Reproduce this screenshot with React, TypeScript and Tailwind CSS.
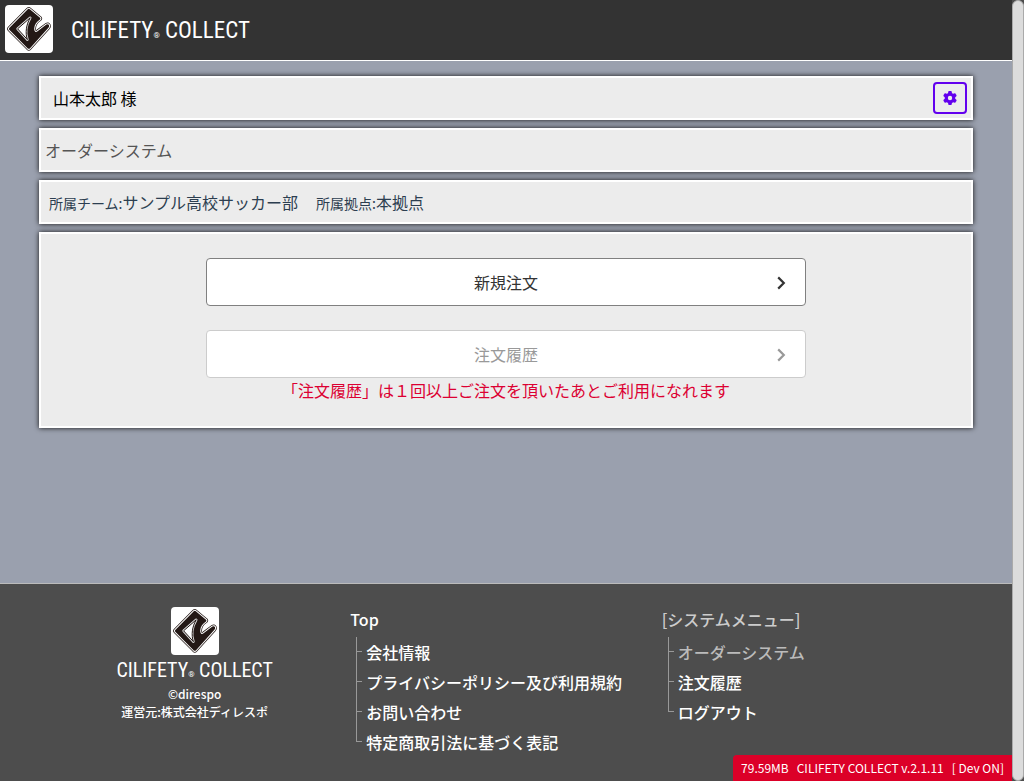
import type { ReactNode } from "react";
import { FaGear } from "react-icons/fa6";

type MenuItem = {
  label: string;
  href?: string;
};

const siteLinks: MenuItem[] = [
  { label: "会社情報", href: "#company" },
  { label: "プライバシーポリシー及び利用規約", href: "#privacy" },
  { label: "お問い合わせ", href: "#contact" },
  { label: "特定商取引法に基づく表記", href: "#law" },
];

// the current page has no href
const systemLinks: MenuItem[] = [
  { label: "オーダーシステム" },
  { label: "注文履歴", href: "#history" },
  { label: "ログアウト", href: "#logout" },
];

const LOGO_BODY =
  "M22.8 4.2 Q23.8 3.3 24.8 4.2 L35 12.8 Q35.8 13.6 35 14.4 C31.8 16.4 29.4 19.5 29.2 23.6 C29.2 27.4 31 27.6 32.6 26.2 L41.4 19.6 Q43.2 18.6 44 20.2 Q44.6 21.6 43.4 22.8 L24.8 43.4 Q23.8 44.3 22.8 43.4 L4.3 24.7 Q3.4 23.8 4.3 22.9 Z";
const LOGO_FIN = "M25.2 12.8 L12.6 23.8 L22.4 34.6 C20 28 21.2 19.6 25.2 12.8 Z";

function Logo() {
  return (
    <svg viewBox="0 0 48 48" className="size-12 shrink-0" aria-hidden="true">
      <rect width="48" height="48" rx="4" fill="#fff" />
      <path d={LOGO_BODY} fill="none" stroke="#231815" strokeWidth="3.4" strokeLinejoin="round" />
      <path d={LOGO_BODY} fill="none" stroke="#fff" strokeWidth="2" strokeLinejoin="round" />
      <path d={LOGO_BODY} fill="#231815" />
      <path d={LOGO_FIN} fill="none" stroke="#ddd" strokeWidth="2.6" strokeLinejoin="round" />
      <path d={LOGO_FIN} fill="#fff" stroke="#231815" strokeWidth="1" strokeLinejoin="round" />
    </svg>
  );
}

function Wordmark() {
  return (
    <>
      CILIFETY<span className="text-[8px] leading-none">®</span> COLLECT
    </>
  );
}

function Card({ className, children }: { className: string; children: ReactNode }) {
  return (
    <section className={"border-2 border-white bg-[#ececec] shadow-[0_0_5px_#111] " + className}>
      {children}
    </section>
  );
}

function OrderButton({ label, disabled }: { label: string; disabled?: boolean }) {
  return (
    <button
      type="button"
      disabled={disabled}
      className="grid h-12 w-full max-w-[600px] grid-cols-[24px_1fr_24px] items-center rounded border border-[#808080] bg-white px-3 text-[#333] disabled:border-[#ccc] disabled:text-[#999]"
    >
      <span className="col-start-2">{label}</span>
      <svg viewBox="0 0 24 24" className="size-6" aria-hidden="true">
        <path d="M9.2 7.4 L14.8 13 L9.2 18.6" fill="none" stroke="currentColor" strokeWidth="2.2" />
      </svg>
    </button>
  );
}

function FooterMenu({ heading, items }: { heading: ReactNode; items: MenuItem[] }) {
  return (
    <nav className="font-medium">
      <div className="mb-1.5">{heading}</div>
      <ul className="ml-1.5">
        {items.map((item, i) => (
          <li key={item.label} className="flex h-[30px] items-center gap-1">
            {/* tree branch */}
            <span className="grid h-full w-1.5 grid-rows-2">
              <span className="border-b border-l border-[#999]" />
              {i < items.length - 1 && <span className="border-l border-[#999]" />}
            </span>
            {item.href ? (
              <a href={item.href} className="whitespace-nowrap">
                {item.label}
              </a>
            ) : (
              <span className="whitespace-nowrap text-[#bbb]">{item.label}</span>
            )}
          </li>
        ))}
      </ul>
    </nav>
  );
}

export default function App() {
  return (
    <div className="flex min-h-screen bg-[#4d4d4d] font-['Noto_Sans_CJK_JP',sans-serif] text-base">
      <div className="relative flex min-w-0 flex-1 flex-col">
        <header className="flex h-[61px] items-center gap-[18px] border-b border-white bg-[#333] px-[5px] pb-0.5 text-white">
          <Logo />
          <h1 className="pt-1 font-['Roboto_Condensed','Noto_Sans_CJK_JP',sans-serif] text-[23px]">
            <Wordmark />
          </h1>
        </header>

        <main className="flex flex-1 flex-col gap-2 bg-[#9aa0ae] px-[39px] py-[15px]">
          <Card className="flex h-11 items-center justify-between pr-1 pl-3 text-black">
            <span>山本太郎 様</span>
            <button
              type="button"
              aria-label="設定"
              className="flex h-8 w-[34px] items-center justify-center rounded border-2 border-[#6200ee] text-[#6200ee]"
            >
              <FaGear className="size-3.5" />
            </button>
          </Card>

          <Card className="flex h-11 items-center px-1 text-[#555]">
            <h2>オーダーシステム</h2>
          </Card>

          <Card className="flex h-11 items-center gap-[18px] px-2 text-[#2c3e50]">
            <p>
              <span className="text-sm">所属チーム:</span>サンプル高校サッカー部
            </p>
            <p>
              <span className="text-sm">所属拠点:</span>本拠点
            </p>
          </Card>

          <Card className="flex flex-col items-center px-6 pt-6 pb-6">
            <OrderButton label="新規注文" />
            <div className="mt-6 flex w-full flex-col items-center">
              <OrderButton label="注文履歴" disabled />
              <p className="text-[#dc0032]">
                「注文履歴」は１回以上ご注文を頂いたあとご利用になれます
              </p>
            </div>
          </Card>
        </main>

        <footer className="grid grid-cols-3 border-t border-[#bbb] px-[39px] pt-[23px] pb-6 text-white">
          <div className="flex flex-col items-center text-xs font-medium">
            <Logo />
            <div className="h-[30px] font-['Roboto_Condensed','Noto_Sans_CJK_JP',sans-serif] text-xl leading-[30px] font-normal">
              <Wordmark />
            </div>
            <div className="leading-[18px]">©direspo</div>
            <div className="leading-[18px]">運営元:株式会社ディレスポ</div>
          </div>
          <FooterMenu heading={<a href="#top">Top</a>} items={siteLinks} />
          <FooterMenu
            heading={<span className="text-[#ccc]">[システムメニュー]</span>}
            items={systemLinks}
          />
        </footer>

        <div className="absolute right-0 bottom-0 flex h-[26px] items-center gap-2 rounded-tl bg-[#dc0028] px-2 text-xs whitespace-pre text-white">
          <span>79.59MB</span>
          <span>CILIFETY COLLECT v.2.1.11</span>
          <span>[ Dev ON]</span>
        </div>
      </div>

      <div className="w-3 shrink-0 rounded-full border border-[#aaa] bg-[#dcdcdc]" />
    </div>
  );
}
